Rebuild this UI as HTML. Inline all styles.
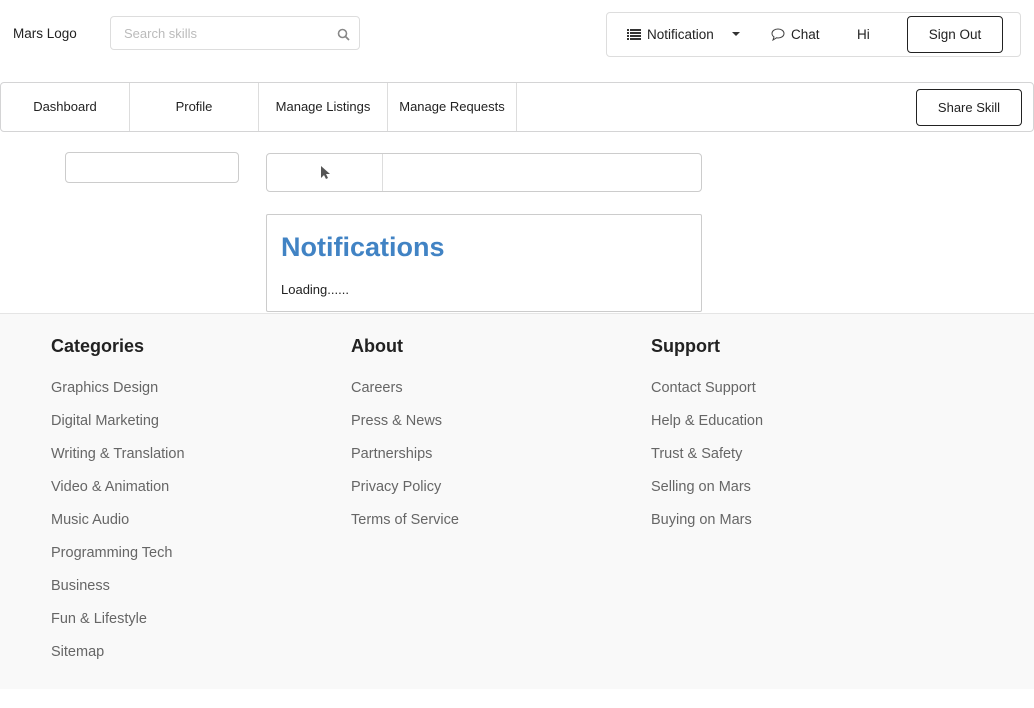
<!DOCTYPE html>
<html><head><style>
*{box-sizing:border-box;margin:0;padding:0}
body{width:1034px;height:708px;background:#fff;font-family:"Liberation Sans",sans-serif;color:#222;font-size:13.5px;position:relative;overflow:hidden}
.abs{position:absolute}
.box{border:1px solid #d4d4d5;border-radius:4px;background:#fff}
</style></head><body>
<div class="abs" style="left:13px;top:26px;">Mars Logo</div>
<div class="abs box" style="left:110px;top:16px;width:250px;height:34px;border-color:#ddd">
 <span class="abs" style="left:13px;top:9px;color:#bbb;font-size:13px">Search skills</span>
 <svg class="abs" style="left:226px;top:11px" width="13" height="13" viewBox="0 0 13 13"><circle cx="5.5" cy="5.5" r="4" fill="none" stroke="#888" stroke-width="1.6"/><line x1="8.5" y1="8.5" x2="12" y2="12" stroke="#888" stroke-width="1.8"/></svg>
</div>
<div class="abs box" style="left:606px;top:12px;width:415px;height:45px;border-color:#ddd">
 <svg class="abs" style="left:20px;top:16px" width="14" height="11" viewBox="0 0 14 11"><g fill="#333"><rect x="0" y="0" width="2" height="2"/><rect x="3" y="0" width="11" height="2"/><rect x="0" y="3" width="2" height="2"/><rect x="3" y="3" width="11" height="2"/><rect x="0" y="6" width="2" height="2"/><rect x="3" y="6" width="11" height="2"/><rect x="0" y="9" width="2" height="2"/><rect x="3" y="9" width="11" height="2"/></g></svg>
 <span class="abs" style="left:40px;top:14px">Notification</span>
 <svg class="abs" style="left:125px;top:19px" width="8" height="5"><path d="M0 0H8L4 4Z" fill="#333"/></svg>
 <svg class="abs" style="left:164px;top:15px" width="14" height="13" viewBox="0 0 14 13"><path d="M7 1C3.5 1 1 3 1 5.5c0 1.4.8 2.6 2 3.4L2 12l3.5-2.2c.5.1 1 .2 1.5.2 3.5 0 6-2 6-4.5S10.5 1 7 1z" fill="none" stroke="#444" stroke-width="1"/></svg>
 <span class="abs" style="left:184px;top:14px">Chat</span>
 <span class="abs" style="left:250px;top:14px">Hi</span>
 <div class="abs" style="left:300px;top:3px;width:96px;height:37px;border:1px solid #222;border-radius:4px;text-align:center;line-height:35px">Sign Out</div>
</div>
<div class="abs" style="left:0;top:82px;width:1034px;height:50px;border:1px solid #d4d4d5;border-radius:4px;font-size:13px">
 <div class="abs" style="left:0;top:0;width:129px;height:48px;border-right:1px solid #ddd;text-align:center;line-height:48px">Dashboard</div>
 <div class="abs" style="left:129px;top:0;width:129px;height:48px;border-right:1px solid #ddd;text-align:center;line-height:48px">Profile</div>
 <div class="abs" style="left:258px;top:0;width:129px;height:48px;border-right:1px solid #ddd;text-align:center;line-height:48px">Manage Listings</div>
 <div class="abs" style="left:387px;top:0;width:129px;height:48px;border-right:1px solid #ddd;text-align:center;line-height:48px">Manage Requests</div>
 <div class="abs" style="left:915px;top:6px;width:106px;height:37px;border:1px solid #222;border-radius:4px;text-align:center;line-height:35px">Share Skill</div>
</div>
<div class="abs box" style="left:65px;top:152px;width:174px;height:31px;border-color:#ccc"></div>
<div class="abs box" style="left:266px;top:153px;width:436px;height:39px;border-color:#ccc">
 <div class="abs" style="left:115px;top:0;width:1px;height:37px;background:#ddd"></div>
 <svg class="abs" style="left:53px;top:11px" width="10" height="15" viewBox="0 0 10 15"><path d="M1 1V13L4 10L6 14L8 13L6 9H10Z" fill="#555"/></svg>
</div>
<div class="abs box" style="left:266px;top:214px;width:436px;height:98px;border-color:#ccc;border-radius:2px">
 <div class="abs" style="left:14px;top:17px;font-size:27px;font-weight:bold;color:#4183c4">Notifications</div>
 <div class="abs" style="left:14px;top:67px;font-size:13px">Loading......</div>
</div>
<div class="abs" style="left:0;top:313px;width:1034px;height:376px;background:#f9f9f9;border-top:1px solid #e5e5e5">
 <div class="abs" style="left:51px;top:22px;font-size:18px;font-weight:bold">Categories</div>
 <div class="abs" style="left:351px;top:22px;font-size:18px;font-weight:bold">About</div>
 <div class="abs" style="left:651px;top:22px;font-size:18px;font-weight:bold">Support</div>
 <div class="abs" style="left:51px;top:58px;color:#666;font-size:14.5px;line-height:33px">Graphics Design<br>Digital Marketing<br>Writing &amp; Translation<br>Video &amp; Animation<br>Music Audio<br>Programming Tech<br>Business<br>Fun &amp; Lifestyle<br>Sitemap</div>
 <div class="abs" style="left:351px;top:58px;color:#666;font-size:14.5px;line-height:33px">Careers<br>Press &amp; News<br>Partnerships<br>Privacy Policy<br>Terms of Service</div>
 <div class="abs" style="left:651px;top:58px;color:#666;font-size:14.5px;line-height:33px">Contact Support<br>Help &amp; Education<br>Trust &amp; Safety<br>Selling on Mars<br>Buying on Mars</div>
</div>
</body></html>
